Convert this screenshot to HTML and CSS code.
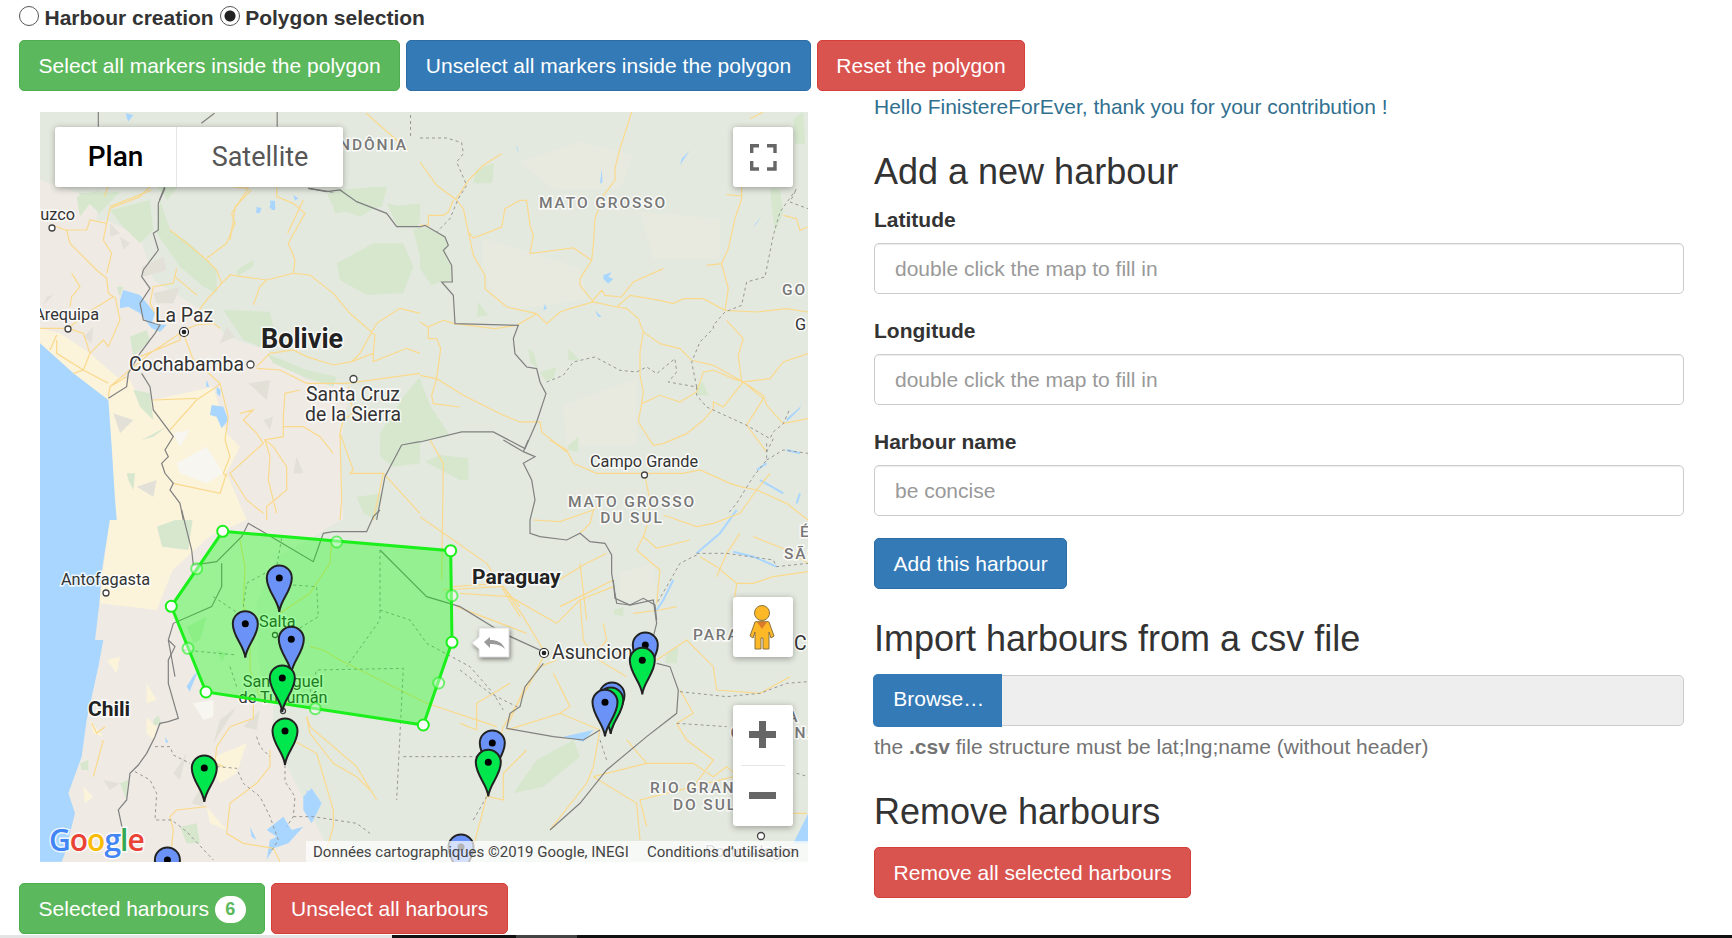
FILE: index.html
```html
<!DOCTYPE html>
<html lang="en">
  <head>
    <meta charset="UTF-8" />
    <title>Harbours</title>
    <link rel="stylesheet" href="styles.css">
  </head>
  <body>
    <div class="mode-row">
      <label class="mode"><input type="radio" name="mode" /> Harbour creation</label>
      <label class="mode"><input type="radio" name="mode" checked /> Polygon selection</label>
    </div>
    <div class="polygon-actions">
      <button class="btn btn-success">Select all markers inside the polygon</button>
      <button class="btn btn-primary">Unselect all markers inside the polygon</button>
      <button class="btn btn-danger">Reset the polygon</button>
    </div>
    <div class="main">
      <div class="left-col">
        <div class="map">
          <svg class="map-canvas" viewBox="40 112 768 750" width="768" height="750">
            <defs>
              <g id="pin">
                <path d="M0 34C-1 22-12.500 13-12.500 0A12.500 12.500 0 1 1 12.500 0C12.500 13 1 22 0 34Z" />
                <circle r="3.500" class="pin-dot" />
              </g>
            </defs>
            <rect class="land" x="40" y="112" width="768" height="750" />

            <!-- middle band, goes first so the west side sits on top of it -->
            <g transform="translate(0 470) scale(.523 .3333)">
              <path class="warm" d="M76 0L650 0 650 150 600 200 530 260 490 400 500 700 520 800 640 1175 76 1175Z" />
              <path class="beige" d="M220 0L440 0 470 150 400 200 330 300 300 420 190 400Z" />
              <path class="ocean" d="M76 0L220 0 215 100 195 300 190 400 178 560 140 900 76 900Z" />
              <path class="forest" d="M300 170L370 130 360 240 310 230Z" />
            </g>

            <!-- top strip of the map -->
            <g transform="scale(.523 .3333)">
              <path class="warm" d="M76 540L190 600 180 700 76 700Z" />
              <path class="forest" d="M630 570L740 560 730 620 640 640ZM740 610L800 630 800 680 760 680ZM910 510L945 490 940 550 905 550ZM300 560L340 560 320 600ZM150 580L230 575 190 640Z" />
              <path class="water" d="M240 340L255 345 245 365ZM490 620L500 625 495 640ZM520 600L525 625 515 625Z" />
              <path class="roads" d="M700 340L780 450M480 570L450 620 440 720M580 600L550 700M210 620L290 570M200 590L210 540M400 560L480 480 470 400" />
              <path class="borders" d="M188 336L188 380M385 370L410 340M530 336L530 380M315 560L305 600M590 565L630 575 680 600" />
              <path class="dashed" d="M785 345L785 415" />
            </g>

            <!-- west side, Peru and Bolivia -->
            <g transform="translate(40 180) scale(.3333)">
              <path class="warm" d="M0 130L200 120 300 170 340 300 500 400 560 470 680 510 800 600 930 620 900 800 910 1020 0 1020Z" />
              <path class="beige" d="M0 445L60 460 150 520 230 590 270 600 290 640 340 660 520 620 560 760 600 800 560 880 620 1020 230 1020 205 660 100 580 0 490Z" />
              <path class="pale-spot" d="M410 850L500 800 550 880 500 910 420 880ZM400 760L450 750 420 800Z" />
              <path class="rock" d="M305 260L370 230 380 270 310 290ZM340 340L420 320 400 370 350 370ZM20 350L40 345 10 375ZM130 470L160 440 155 490ZM560 440L585 470 540 490ZM625 610L690 600 680 660ZM670 720L700 710 690 750ZM770 830L790 880 760 880ZM240 170L270 190 250 210ZM210 130L240 160 210 170ZM220 700L280 720 240 760ZM290 920L350 900 340 950Z" />
              <path class="ocean" d="M0 490L100 580 205 660 215 800 225 960 230 1020 0 1020Z" />
              <path class="forest" d="M360 60L390 150 450 190 530 270 530 340 490 320 420 260 350 160ZM210 90L330 60 340 150 300 190 240 130ZM110 50L180 30 120 110ZM860 40L1000 20 1030 70 960 110 880 80ZM1050 80L1140 70 1140 130 1080 130ZM890 250L1000 190 1090 190 1120 260 1090 340 980 345 900 300ZM550 390L690 395 700 440 660 500 610 480ZM680 520L800 570 890 590 880 620 790 590 700 550ZM590 270L640 240 640 260 590 290ZM1120 150L1140 140 1140 230ZM1020 760L1090 650 1140 590 1140 850 1060 860 1020 830ZM950 950L1030 940 1010 1020 970 1000ZM280 630L330 640 340 720 300 680ZM305 780L380 740 340 770ZM230 320L250 320 240 350ZM270 470L320 450 330 480 280 530ZM260 880L285 880 280 930 265 900Z" />
              <path class="water" d="M250 330L300 345 345 400 335 430 380 435 360 455 335 445 300 400 265 380 240 385 240 360ZM515 675L550 680 565 720 545 745 530 710 510 705ZM530 620L542 630 540 650 530 640ZM500 600L508 620 498 620ZM650 85L662 85 660 100 648 98ZM690 62L705 62 706 90 695 90ZM760 45L775 55 765 62Z" />
              <path class="roads" d="M330 20L300 50 210 85 200 130 150 120 140 150 75 150 50 140M80 150L90 190 170 270 200 295 205 340 220 350 140 400 85 445M200 130L190 180 215 220 200 280M95 280L120 320 95 350 90 380M225 350L240 420 205 500 190 480 150 520M0 445L85 445 130 460 150 520 130 570 100 580M30 510L50 465M50 480L50 520 130 570 205 610M205 650L210 620 330 520 420 460 420 480 300 530M210 620L260 590M390 150L440 190 500 240 530 270 545 310 500 360 470 400M580 20L625 25 575 100 585 130 560 190 500 235M710 20L710 50 760 70 795 100 745 190 765 240 760 280 680 300 570 285 545 310M680 300L660 320 640 375M760 280L810 285 880 340 930 400 1005 465 1000 520 935 545 960 520 1010 430 1080 385 1140 400M1000 520L1000 545 1100 505 1140 520M935 545L880 555 800 530 760 510 690 520 650 560M410 265L400 310 340 320 330 370 345 400M405 290L440 320 470 345M420 455L470 435 520 430 540 445M430 460L460 540 540 610 530 620 470 660 390 750M540 610L565 710 555 780 570 830 550 880 560 890M650 565L720 570 800 610 920 610 1140 580M925 620L940 700 910 720 900 760 940 870 930 880 1030 880 1140 1000M780 630L735 640 730 710 730 770 675 780 700 800 740 860 740 930 680 980 680 1020M730 740L790 740 840 770 880 820M600 700L640 690 610 720 650 760 670 790 570 880 620 960 670 1000M560 880L540 940 400 910M675 780L690 830 685 900 710 1000M900 760L905 960 900 1020M1030 880L1000 1020M340 660L470 655" />
              <path class="borders" d="M375 25L355 70 355 150 340 160 355 210 310 270 305 290 330 325 300 370 310 420 360 435 345 460 300 520 265 580 260 620 205 655M305 580L330 620 340 690 400 770 375 810 385 830 365 850 375 880 400 910 390 930 420 970 430 1020M805 25L860 35 900 30 950 65 1040 100 1070 140 1140 140M1085 795L1140 785M1085 795L1035 890 1010 1020" />
            </g>

            <!-- north east, Mato Grosso -->
            <g transform="translate(420 112) scale(.3333)">
              <path class="pale" d="M190 380L330 420 480 470 500 560 300 590 220 560 190 470ZM300 150L480 90 640 130 600 230 400 230ZM660 300L900 320 900 440 700 440ZM430 880L650 800 650 1000 440 1000Z" />
              <path class="forest" d="M0 350L20 345 75 375 85 400 75 420 95 460 95 510 60 510 35 520 0 470ZM170 215L190 165 215 155 218 205ZM170 615L175 570 205 610ZM325 710L340 720 355 770 330 750ZM445 710L480 745 445 745ZM360 780L410 765 400 800 375 805ZM830 820L850 810 865 850 830 850ZM1050 230L1080 230 1090 300 1065 360 1058 310ZM1120 20L1150 0 1155 95 1125 95ZM0 800L30 880 90 970 0 990ZM445 1000L475 975 475 1020 445 1015Z" />
              <path class="water" d="M290 100L297 125 290 110ZM545 170L548 210 540 215ZM375 575L380 590 370 595ZM550 490L575 480 565 495 580 500 565 515 550 500ZM780 160L810 115 785 140ZM1000 345L1025 310 1010 335ZM525 595L545 615 535 615ZM1100 920L1140 885 1145 860 1140 890 1100 930Z" />
              <path class="roads" d="M635 0L600 110 585 170 585 205 550 250 525 320 520 400 515 445 480 500 480 520 520 570M0 150L50 220 90 250 108 262 145 205 190 160 245 125M108 262L130 290 145 360 160 430 195 490 195 530 260 585 350 605 380 635 420 600 450 590 520 570 590 585 620 590 655 620 670 660 720 695 780 710 815 745 880 760 970 810 1030 850 1040 880 1090 935 1164 920M25 310L25 340 0 340M25 310L70 310 85 300 100 265M145 360L160 378 195 365 245 345 255 290 300 265 320 265 330 340 340 370 330 425 460 408 515 445M515 570L545 535 555 550 605 555 640 510 730 470M590 585L630 550 720 565 760 575 790 560 850 560 915 595 925 530 905 455 860 460 905 455 925 410 945 320 965 260 965 225M920 248L965 252M915 595L1010 600 1100 590 1164 600M920 625L970 680 955 730 965 810 1050 800 1090 750 1164 725M670 660L660 720 660 790 670 840 665 875 720 850 780 870 830 840 850 780 880 775 940 800 970 810M665 875L655 930 700 1000 730 995 800 965 850 925 880 890 880 870 910 885 970 810M970 810L1030 860 980 940 1040 1020M0 630L25 645 70 625 105 635 225 650 290 640 350 605M25 645L25 680 50 680 62 710 50 800 35 850 40 875 120 885M0 790L50 800 130 850 250 910 300 930 360 930 365 960 440 1020M1090 310L1130 320 1140 355 1164 345M1030 0L990 20" />
              <path class="borders" d="M0 345L15 340 75 375 85 400 70 415 95 460 97 510 65 510 100 550 105 635 295 640 280 680 285 725 320 765 350 770 360 810 378 845 350 930 315 1010 220 960 125 960 0 990" />
              <path class="dashed" d="M0 78L80 78 125 92 130 125 110 150 140 220 115 260 90 320 50 360M380 810L430 790 460 750 525 735 600 775 650 780 680 765 710 785 765 740 770 780 745 810 830 825 830 850 860 885 980 940 1050 980 1060 960 1090 935 1110 890M830 825L815 750 840 690 880 650 880 640 915 600 965 580 980 510 1035 495 1060 370 1080 300 1130 230 1110 270 1164 290M1060 980L1040 1020" />
            </g>

            <!-- south west, Chile and Argentina -->
            <g transform="translate(40 640) scale(.3333)">
              <path class="warm" d="M175 0L510 0 700 130 690 660 65 665 105 520 85 460 125 350 140 240Z" />
              <path class="beige" d="M500 360L620 310 590 400 540 430ZM500 500L560 570 510 550ZM320 230L350 260 340 300 320 280ZM150 240L190 290 160 280ZM130 440L160 470 135 490ZM200 60L240 50 230 100ZM320 130L350 180 320 190Z" />
              <path class="pale-spot" d="M460 190L520 180 520 230 490 240Z" />
              <path class="rock" d="M460 480L490 430 490 500 455 490ZM540 240L590 200 520 310ZM610 260L660 210 650 270ZM400 400L440 340 420 420ZM190 420L240 430 210 450Z" />
              <path class="ocean" d="M0 0L190 0 175 80 140 240 125 350 85 460 105 520 75 640 65 665 0 665Z" />
              <path class="forest" d="M340 240L355 225 365 255 340 255ZM420 560L470 550 480 610 440 610ZM120 370L145 360 145 390 125 390ZM240 430L265 420 260 480Z" />
              <path class="water" d="M790 470L815 445 845 490 815 550 790 510ZM730 530L755 570 790 560 745 610 700 625 680 660 690 600 710 590 680 570ZM630 560L650 600 635 590ZM440 140L475 90 455 140ZM375 290L385 305 378 310Z" />
              <path class="roads" d="M640 190L640 235 570 260 530 320 525 370 550 380M800 230L810 280 880 370 950 410 990 450M700 270L775 310 830 340 880 510 880 560 850 665M690 330L690 380 650 430 570 490 560 580 610 610 700 625 720 665M500 500L410 510 390 530 400 570 395 620M190 300L160 410M155 250L170 280 195 260" />
              <path class="borders" d="M385 0L405 20 385 60 385 130 415 235 385 245 360 250 345 290 320 340 295 375 270 400 260 480 235 510 250 580 250 620" />
              <path class="dashed" d="M345 320L390 320 400 345 450 370M530 380L590 385 610 430 660 470 690 530 715 600 690 640M735 375L735 425 765 470 760 530 740 560M285 395L330 420 350 460 345 540 395 540 440 575 520 660M760 530L820 530 950 550 990 580M650 290L660 320 690 350" />
            </g>

            <!-- Mato Grosso do Sul -->
            <g transform="translate(420 440) scale(.3333)">
              <path class="forest" d="M15 65L60 45 145 55 145 120 120 120ZM445 20L470 0 470 25ZM580 520L610 505 610 530Z" />
              <path class="pale" d="M600 400L700 370 710 480 600 480Z" />
              <path class="river" d="M1010 90L1040 70M830 340L900 280 950 210M1020 120L1090 160M940 335L1000 350 1070 380M1130 190L1140 160M1100 30L1140 40" />
              <path class="roads" d="M390 0L440 30 460 70 530 100 660 100 790 100 840 90 930 130 960 140 1010 150 1100 190 1164 240M675 110L690 180 680 260 670 290 650 330 720 390 710 490M670 290L710 325 810 300M520 210L510 250 480 280M340 240L420 245 520 210 540 190M730 225L830 260 880 250 960 220 1010 150 1050 100M1000 290L1100 330 1164 370M840 350L890 380 950 430 1000 430 1060 410 1164 395M960 280L920 340 890 410M950 430L940 510M480 370L500 540M400 430L500 370 560 340M30 0L70 70 65 420M0 230L100 300 200 370 250 450 300 530M100 440L240 430 300 500M580 420L480 470 420 500M640 520L720 510 770 500" />
              <path class="borders" d="M250 0L310 35 325 0M310 35L345 50 310 70 335 120 345 180 330 240 330 280 360 290 440 300 480 280 510 305 555 310 575 345 575 400 590 490 630 495 670 475 705 495 710 540" />
              <path class="dashed" d="M1040 10L1040 60 1000 110 950 190 925 220M1040 60L1090 30 1164 40M830 340L920 340 1060 360 1070 380 1164 370M830 345L780 370 740 440 710 490" />
            </g>

            <!-- Salta and Tucuman area -->
            <g transform="translate(150 510) scale(.3333)">
              <path class="forest" d="M110 350L170 320 150 390 130 400ZM200 420L230 430 215 455Z" />
              <path class="water" d="M110 530L135 490 120 545ZM470 840L510 870 470 870Z" />
              <path class="roads" d="M270 90L285 170 280 280 300 400 300 480 330 560M545 90L540 160 480 250 390 310M480 410L520 420 570 450 830 580 1040 650M470 620L480 650 620 770 680 870M880 240L1050 230M1060 230L1120 320 1180 420M920 290L1130 370M1180 440L1140 520 1060 650 1040 730 1010 860M1010 860L960 1050" />
              <path class="borders" d="M95 0L125 120 130 165 200 155 275 80 295 40 330 60 380 90 490 155 520 70 550 65 650 65 670 20 690 0M690 120L830 260 930 290 1060 370 1180 425M215 160L215 230 185 290 70 340 55 390 75 500" />
              <path class="dashed" d="M395 85L380 170 290 220 280 290M430 225L500 230 505 320 440 360M190 260L280 320M100 420L260 435M240 470L260 530M470 580L500 480 760 475 740 870M690 120L690 330 590 470M690 300L780 330 830 400 960 470 1030 550 1060 600M760 740L1010 740" />
            </g>

            <!-- Paraguay and south Brazil -->
            <g transform="translate(460 580) scale(.3333)">
              <path class="water" d="M1045 700L1000 790 1045 790ZM310 470L400 450 370 485Z" />
              <path class="forest" d="M160 640L230 540 340 480 360 530 250 620ZM460 90L490 80 490 105 465 105ZM620 220L655 200 650 250 615 250Z" />
              <path class="river" d="M640 0L610 60 590 90" />
              <path class="roads" d="M0 40L150 50 290 130 360 60 460 20M360 60L370 180 400 230 500 290M290 240L240 260 190 330 160 400 140 440M140 450L300 400 420 450M420 450L400 560 380 610 270 750M280 280L330 380 300 400M500 480L560 550 400 590M560 550L700 550 760 590 800 560 870 620 1000 570M650 430L680 480 760 540 700 620 540 660 560 740M590 240L680 180 760 260 770 330 900 340 990 290M660 330L700 400 650 430M400 590L530 670 540 780M85 650L130 660 130 580 200 510M0 430L50 450 50 370 150 310M700 620L820 590 930 700 1040 700M430 130L440 180 400 230M890 740L910 640 1000 640" />
              <path class="borders" d="M460 0L465 55 510 75 580 60 590 130 575 190M250 250L195 320 180 380 150 400 140 445 280 470 370 480 420 450M590 250L630 260 655 330 650 400 560 470 440 570 360 670 270 750" />
              <path class="dashed" d="M0 270L90 340 180 385M660 335L800 350 900 340 980 310 1045 305M650 430L800 440M420 480L440 540M40 720L80 650M1010 580L1045 590" />
            </g>

            <g class="labels">
              <text class="region" x="408" y="150" text-anchor="end">RONDÔNIA</text>
              <text class="region" x="539" y="208">MATO GROSSO</text>
              <text class="region" x="782" y="295">GO</text>
              <text class="region" x="632" y="507" text-anchor="middle">MATO GROSSO</text>
              <text class="region" x="632" y="523" text-anchor="middle">DU SUL</text>
              <text class="region" x="800" y="537">É</text>
              <text class="region" x="784" y="559">SÃO</text>
              <text class="region" x="693" y="640">PARANÁ</text>
              <text class="region" x="770" y="722" text-anchor="middle">SANTA</text>
              <text class="region" x="775" y="738" text-anchor="middle">CATARINA</text>
              <text class="region" x="650" y="793">RIO GRANDE</text>
              <text class="region" x="673" y="810">DO SUL</text>
              <text class="city" x="75" y="220" text-anchor="end">Cuzco</text>
              <text class="city" x="99" y="320" text-anchor="end">Arequipa</text>
              <text class="city big" x="155" y="322">La Paz</text>
              <text class="city big" x="129" y="371">Cochabamba</text>
              <text class="city big" x="353" y="401" text-anchor="middle">Santa Cruz</text>
              <text class="city big" x="353" y="421" text-anchor="middle">de la Sierra</text>
              <text class="city" x="590" y="467">Campo Grande</text>
              <text class="city" x="795" y="330">G</text>
              <text class="city" x="61" y="585">Antofagasta</text>
              <text class="city big" x="552" y="659">Asuncion</text>
              <text class="city big" x="794" y="650">C</text>
              <text class="city" x="259" y="627">Salta</text>
              <text class="city" x="283" y="687" text-anchor="middle">San Miguel</text>
              <text class="city" x="283" y="703" text-anchor="middle">de Tucumán</text>
              <text class="city faded" x="705" y="857">Porto Alegre</text>
              <text class="country" x="261" y="348">Bolivie</text>
              <text class="country small" x="472" y="584">Paraguay</text>
              <text class="country small" x="88" y="716">Chili</text>
              <circle class="town" cx="52" cy="228" r="3" />
              <circle class="town" cx="68" cy="329" r="3" />
              <circle class="town" cx="250.500" cy="364.500" r="3.500" />
              <circle class="town" cx="353.500" cy="379" r="3.500" />
              <circle class="town" cx="644.500" cy="475" r="3" />
              <circle class="town" cx="106" cy="593" r="3" />
              <circle class="town" cx="275" cy="635" r="2.500" />
              <circle class="town" cx="283" cy="711" r="2.500" />
              <circle class="town" cx="761" cy="836" r="3.500" />
              <circle class="capital-ring" cx="184" cy="332" r="4.500" />
              <circle class="capital" cx="184" cy="332" r="2.300" />
              <circle class="capital-ring" cx="544" cy="653" r="4.500" />
              <circle class="capital" cx="544" cy="653" r="2.300" />
              <text class="google" x="49" y="851"><tspan class="g-blue">G</tspan><tspan class="g-red">o</tspan><tspan class="g-yellow">o</tspan><tspan class="g-blue">g</tspan><tspan class="g-green">l</tspan><tspan class="g-red">e</tspan></text>
            </g>

            <path class="poly" d="M222.700 531.300L450.700 550.700 452 642.300 423.300 725 206 692 171.300 606.300Z" />
            <circle class="handle-mid" cx="196.700" cy="568.700" r="5.500" />
            <circle class="handle-mid" cx="336.700" cy="542" r="5.500" />
            <circle class="handle-mid" cx="452" cy="595.700" r="5.500" />
            <circle class="handle-mid" cx="438.700" cy="683" r="5.500" />
            <circle class="handle-mid" cx="315.300" cy="708.700" r="5.500" />
            <circle class="handle-mid" cx="188" cy="648.300" r="5.500" />
            <circle class="handle" cx="222.700" cy="531.300" r="5.500" />
            <circle class="handle" cx="450.700" cy="550.700" r="5.500" />
            <circle class="handle" cx="452" cy="642.300" r="5.500" />
            <circle class="handle" cx="423.300" cy="725" r="5.500" />
            <circle class="handle" cx="206" cy="692" r="5.500" />
            <circle class="handle" cx="171.300" cy="606.300" r="5.500" />

            <use href="#pin" class="pin-blue" x="279.300" y="578" />
            <use href="#pin" class="pin-blue" x="245.300" y="623.700" />
            <use href="#pin" class="pin-blue" x="291.300" y="639.300" />
            <use href="#pin" class="pin-green" x="282.300" y="678" />
            <use href="#pin" class="pin-green" x="285" y="731" />
            <use href="#pin" class="pin-green" x="204.300" y="768" />
            <use href="#pin" class="pin-blue" x="492.300" y="743" />
            <use href="#pin" class="pin-green" x="488.300" y="762.300" />
            <use href="#pin" class="pin-blue" x="645.300" y="645" />
            <use href="#pin" class="pin-green" x="642.300" y="660.300" />
            <use href="#pin" class="pin-blue" x="612" y="695" />
            <use href="#pin" class="pin-green" x="610.700" y="700" />
            <use href="#pin" class="pin-blue" x="605" y="702.300" />
            <use href="#pin" class="pin-blue" x="167.400" y="860" />
            <use href="#pin" class="pin-blue" x="461" y="847" />

            <g class="undo">
              <path class="undo-box" d="M479 628H509V657H479V649L472 643 479 637Z" />
              <path class="undo-arrow" d="M484 642L490 637V640C497 640 502 642 505 649 501 645 496 644 490 644V648Z" />
            </g>
          </svg>

          <div class="map-type">
            <div class="map-type-item active">Plan</div>
            <div class="map-type-item">Satellite</div>
          </div>
          <div class="map-ctrl fullscreen">
            <svg viewBox="0 0 60 60" width="60" height="60">
              <path class="fs-corner" d="M18.700 26V18.700H26M34 18.700H42V26M42 34V42H34M26 42H18.700V34" />
            </svg>
          </div>
          <div class="map-ctrl pegman">
            <svg viewBox="0 0 60 60" width="60" height="60">
              <circle class="peg-body" cx="29" cy="16" r="7.500" />
              <path class="peg-body" d="M22 25C23 24 35 24 36 25L41 39 38 41 36 35V52H30V41H28V52H22V35L20 41 17 39Z" />
              <path class="peg-neck" d="M24 25H34L29 32Z" />
            </svg>
          </div>
          <div class="map-ctrl zoom-ctrl">
            <div class="zoom-btn"><span class="zoom-plus"></span></div>
            <div class="zoom-sep"></div>
            <div class="zoom-btn"><span class="zoom-minus"></span></div>
          </div>
          <div class="attribution">
            <span>Données cartographiques ©2019 Google, INEGI</span>
            <span class="attr-terms">Conditions d'utilisation</span>
          </div>
        </div>
        <div class="selected-actions">
          <button class="btn btn-success">Selected harbours <span class="badge">6</span></button>
          <button class="btn btn-danger">Unselect all harbours</button>
        </div>
      </div>

      <div class="right-col">
        <p class="hello">Hello FinistereForEver, thank you for your contribution !</p>
        <h2>Add a new harbour</h2>
        <div class="form-group">
          <label for="lat">Latitude</label>
          <input type="text" id="lat" placeholder="double click the map to fill in" />
        </div>
        <div class="form-group">
          <label for="lng">Longitude</label>
          <input type="text" id="lng" placeholder="double click the map to fill in" />
        </div>
        <div class="form-group">
          <label for="name">Harbour name</label>
          <input type="text" id="name" placeholder="be concise" />
        </div>
        <button class="btn btn-primary">Add this harbour</button>
        <h2 class="section-title">Import harbours from a csv file</h2>
        <div class="file-input">
          <span class="file-btn">Browse…</span>
          <span class="file-name"></span>
        </div>
        <p class="help">the <b>.csv</b> file structure must be lat;lng;name (without header)</p>
        <h2 class="section-title tight">Remove harbours</h2>
        <button class="btn btn-danger">Remove all selected harbours</button>
      </div>
    </div>
    <div class="taskbar">
      <div class="taskbar-light"></div>
      <div class="taskbar-dark"></div>
      <div class="taskbar-grey"></div>
      <div class="taskbar-rest"></div>
    </div>
  </body>
</html>
```

FILE: styles.css
```css
* {
  box-sizing: border-box;
}
html,
body {
  height: 938px;
  overflow: hidden;
}
body {
  margin: 0;
  font-family: "Liberation Sans", Arial, sans-serif;
  font-size: 21px;
  line-height: 30px;
  color: #333;
  background: white;
}
.mode-row {
  height: 40px;
  padding: 3px 0 0 19px;
  display: flex;
  gap: 6px;
}
.mode {
  display: flex;
  align-items: center;
  height: 30px;
  font-weight: bold;
  color: #333;
}
.mode input {
  appearance: none;
  width: 20px;
  height: 20px;
  margin: -4px 5.500px 0 0;
  border: 1.500px solid #555;
  border-radius: 50%;
  background: white;
}
.mode input:checked {
  background: radial-gradient(circle, #222 0 5px, white 6px);
}
.polygon-actions {
  display: flex;
  gap: 6px;
  padding-left: 19px;
}
.btn {
  display: inline-block;
  height: 51px;
  padding: 0 18.600px;
  font-family: inherit;
  font-size: 21px;
  line-height: 30px;
  color: white;
  border: 1.200px solid transparent;
  border-radius: 5px;
  white-space: nowrap;
}
.btn-success {
  background-color: #5cb85c;
  border-color: #4cae4c;
}
.btn-primary {
  background-color: #337ab7;
  border-color: #2e6da4;
}
.btn-danger {
  background-color: #d9534f;
  border-color: #d43f3a;
}
.main {
  display: flex;
  height: 844px;
}
.left-col {
  width: 874px;
  flex-shrink: 0;
  padding: 21px 0 0 19px;
}
.map {
  position: relative;
  width: 768px;
  height: 750px;
  margin-left: 21px;
  overflow: hidden;
  background: #e4e9df;
}
.map-canvas {
  display: block;
}
.land {
  fill: #e4e9df;
}
.pale {
  fill: #e8eadf;
}
.warm {
  fill: #efebe4;
}
.beige {
  fill: #fbf3da;
}
.pale-spot {
  fill: #f7f6f1;
}
.rock {
  fill: #e3e0d8;
}
.forest {
  fill: #d6e7ce;
}
.ocean,
.water {
  fill: #a8d6fe;
}
.river {
  fill: none;
  stroke: #a8d6fe;
  stroke-width: 2;
  vector-effect: non-scaling-stroke;
}
.roads {
  fill: none;
  stroke: #fad98c;
  stroke-width: 1.200;
  vector-effect: non-scaling-stroke;
}
.borders {
  fill: none;
  stroke: #808080;
  stroke-width: 1.200;
  vector-effect: non-scaling-stroke;
}
.dashed {
  fill: none;
  stroke: #979797;
  stroke-width: 1;
  stroke-dasharray: 3 3;
  vector-effect: non-scaling-stroke;
}
.labels text {
  font-family: Roboto, sans-serif;
  paint-order: stroke;
  stroke: rgba(255, 255, 255, 0.8);
  stroke-width: 3px;
}
.labels .region {
  font-size: 15.500px;
  font-weight: 500;
  letter-spacing: 1.900px;
  fill: #777;
}
.labels .city {
  font-size: 16.300px;
  fill: #333;
}
.labels .big {
  font-size: 19.400px;
}
.labels .faded {
  fill: #888;
}
.labels .country {
  font-size: 27px;
  font-weight: 700;
  fill: #222;
}
.labels .small {
  font-size: 21px;
}
.labels .google {
  font-family: "Open Sans", sans-serif;
  font-size: 30px;
  font-weight: 600;
  letter-spacing: -1px;
}
.g-blue {
  fill: #4285f4;
}
.g-red {
  fill: #ea4335;
}
.g-yellow {
  fill: #fbbc05;
}
.g-green {
  fill: #34a853;
}
.town {
  fill: white;
  stroke: #444;
  stroke-width: 1.300;
}
.capital-ring {
  fill: white;
  stroke: #222;
  stroke-width: 1.200;
}
.capital {
  fill: #222;
}
.poly {
  fill: rgba(0, 255, 0, 0.35);
  stroke: #1cf01c;
  stroke-width: 3;
}
.handle {
  fill: white;
  stroke: #1cf01c;
  stroke-width: 2;
}
.handle-mid {
  fill: rgba(255, 255, 255, 0.4);
  stroke: rgba(28, 240, 28, 0.6);
  stroke-width: 2;
}
.pin-blue {
  fill: #6b93f7;
  stroke: #222;
  stroke-width: 2;
}
.pin-green {
  fill: #00e64d;
  stroke: #222;
  stroke-width: 2;
}
.pin-dot {
  fill: #000;
  stroke: none;
}
.undo {
  filter: drop-shadow(1px 2px 2px rgba(0, 0, 0, 0.45));
}
.undo-box {
  fill: white;
  stroke: #ddd;
  stroke-width: 1;
}
.undo-arrow {
  fill: #9a9a9a;
}
.map-type {
  position: absolute;
  top: 15px;
  left: 15px;
  display: flex;
  height: 60px;
  background: white;
  border-radius: 3px;
  box-shadow: 0 1.500px 6px rgba(0, 0, 0, 0.3);
  font-family: Roboto, sans-serif;
  font-size: 27px;
  line-height: 60px;
}
.map-type-item {
  width: 166px;
  text-align: center;
  color: #565656;
}
.map-type-item.active {
  width: 122px;
  font-size: 28px;
  font-weight: 500;
  color: black;
  border-right: 1px solid #e6e6e6;
}
.map-ctrl {
  position: absolute;
  left: 693px;
  width: 60px;
  background: white;
  border-radius: 3px;
  box-shadow: 0 1.500px 6px rgba(0, 0, 0, 0.3);
}
.map-ctrl svg {
  display: block;
}
.fullscreen {
  top: 15px;
  height: 60px;
}
.fs-corner {
  fill: none;
  stroke: #666;
  stroke-width: 3.400;
}
.peg-body {
  fill: #fdb827;
  stroke: #8a7340;
  stroke-width: 1;
}
.peg-neck {
  fill: #dc7a2c;
}
.pegman {
  top: 485px;
  height: 60px;
}
.zoom-ctrl {
  top: 593px;
  height: 121px;
  padding: 0 8px;
}
.zoom-btn {
  position: relative;
  height: 60px;
}
.zoom-sep {
  height: 1px;
  background: #e6e6e6;
}
.zoom-plus,
.zoom-minus {
  position: absolute;
  top: 26px;
  left: 8px;
  width: 27px;
  height: 7px;
  background: #666;
}
.zoom-plus::after {
  content: "";
  position: absolute;
  top: -10px;
  left: 10px;
  width: 7px;
  height: 27px;
  background: #666;
}
.attribution {
  position: absolute;
  right: 0;
  bottom: 0;
  display: flex;
  gap: 18px;
  width: 502px;
  height: 21px;
  padding: 1px 0 0 7px;
  background: rgba(255, 255, 255, 0.7);
  font-family: Roboto, sans-serif;
  font-size: 15px;
  line-height: 21px;
  color: #444;
  white-space: nowrap;
}
.selected-actions {
  display: flex;
  gap: 6px;
  margin-top: 21px;
}
.badge {
  display: inline-block;
  min-width: 31px;
  height: 27px;
  font-size: 18px;
  font-weight: bold;
  line-height: 27px;
  text-align: center;
  color: #5cb85c;
  background: white;
  border-radius: 14px;
  vertical-align: 1px;
}
.right-col {
  width: 810px;
}
.hello {
  margin: 1px 0 0;
  color: #31708f;
}
h2 {
  margin: 30px 0 0;
  font-size: 36px;
  font-weight: 500;
  line-height: 40px;
}
.form-group {
  margin-top: 13px;
  margin-bottom: 22px;
}
.form-group label {
  display: block;
  margin-bottom: 8px;
  font-weight: bold;
}
.form-group input {
  display: block;
  width: 100%;
  height: 51px;
  padding: 0 20px;
  font-family: inherit;
  font-size: 21px;
  color: #555;
  border: 1.800px solid #ccc;
  border-radius: 5px;
  box-shadow: inset 0 1px 1px rgba(0, 0, 0, 0.075);
}
.form-group + .form-group {
  margin-top: 0;
}
.form-group input::placeholder {
  color: #999;
}
.section-title {
  margin-top: 30px;
  margin-bottom: 16px;
}
.section-title.tight {
  margin-top: 30px;
  margin-bottom: 15px;
}
.file-input {
  display: flex;
  height: 51px;
  background: #eee;
  border: 1.800px solid #ccc;
  border-radius: 5px;
}
.file-btn {
  width: 129px;
  margin: -1.800px 0 -1.800px -1.800px;
  padding-left: 20px;
  line-height: 50px;
  color: white;
  background: #337ab7;
  border-radius: 5px 0 0 5px;
}
.help {
  margin: 6px 0 0;
  color: #737373;
}
.taskbar {
  display: flex;
  height: 3px;
}
.taskbar-light {
  width: 392px;
  background: #e4e4e4;
}
.taskbar-dark {
  width: 124px;
  background: #111;
}
.taskbar-grey {
  width: 61px;
  background: #444;
}
.taskbar-rest {
  flex: 1;
  background: #111;
}
```
